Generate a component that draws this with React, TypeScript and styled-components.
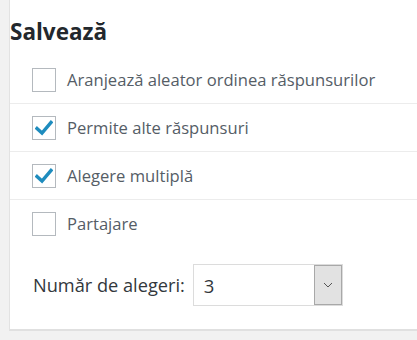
import React from "react";
import styled, { createGlobalStyle } from "styled-components";

const Global = createGlobalStyle`
  html, body { margin: 0; padding: 0; background: #f1f1f1; }
  body { font-family: "Open Sans", "Noto Sans", sans-serif; }
`;

const Page = styled.div`
  display: flex;
  height: 340px;
  padding-left: 9px;
`;

const Panel = styled.div`
  flex: 1;
  height: 331px;
  background: #fff;
  border-left: 1px solid #e2e2e2;
  border-bottom: 2px solid #e0e0e0;
  box-sizing: border-box;
  display: flex;
  flex-direction: column;
`;

const Title = styled.h2`
  margin: 0;
  padding: 17px 0 0 0;
  height: 54px;
  box-sizing: border-box;
  font-size: 22.5px;
  font-weight: 700;
  color: #23282d;
  line-height: 30px;
`;

const List = styled.div`
  display: flex;
  flex-direction: column;
  margin-top: 2px;
`;

const Row = styled.label<{ $last?: boolean }>`
  display: flex;
  align-items: center;
  gap: 11px;
  height: 47px;
  padding-left: 22px;
  border-bottom: ${(p) => (p.$last ? "none" : "1px solid #ececec")};
  font-size: 16.6px;
  color: #555d66;
`;

const Box = styled.span`
  width: 22px;
  height: 22px;
  border: 1px solid #b4b9be;
  background: #fff;
  box-sizing: content-box;
  display: flex;
  align-items: center;
  justify-content: center;
  flex-shrink: 0;
`;

const SelectRow = styled.div`
  display: flex;
  align-items: center;
  gap: 8px;
  padding-left: 23px;
  margin-top: 17px;
  font-size: 18.2px;
  color: #32373c;
`;

const Select = styled.div`
  display: flex;
  width: 150px;
  height: 42px;
  border: 1px solid #dcdcdc;
  box-sizing: border-box;
`;

const Value = styled.div`
  flex: 1;
  display: flex;
  align-items: center;
  padding-left: 10px;
  font-size: 18.5px;
  color: #32373c;
`;

const Arrow = styled.div`
  width: 26px;
  background: #e2e2e2;
  border: 1px solid #a8a8a8;
  display: flex;
  align-items: center;
  justify-content: center;
`;

const Check = () => (
  <svg width="18" height="16" viewBox="0 0 18 16">
    <path d="M2 8.5 L7 13 L16 2.5" fill="none" stroke="#1e8cbe" strokeWidth="3.4" strokeLinecap="square" />
  </svg>
);

const items: { label: string; checked: boolean }[] = [
  { label: "Aranjează aleator ordinea răspunsurilor", checked: false },
  { label: "Permite alte răspunsuri", checked: true },
  { label: "Alegere multiplă", checked: true },
  { label: "Partajare", checked: false },
];

export default function App() {
  return (
    <Page>
      <Global />
      <Panel>
        <Title>Salvează</Title>
        <List>
          {items.map((it, i) => (
            <Row key={it.label} $last={i === items.length - 1}>
              <Box>{it.checked && <Check />}</Box>
              {it.label}
            </Row>
          ))}
        </List>
        <SelectRow>
          Număr de alegeri:
          <Select>
            <Value>3</Value>
            <Arrow>
              <svg width="10" height="6" viewBox="0 0 10 6">
                <path d="M1 1 L5 5 L9 1" fill="none" stroke="#555" strokeWidth="1" />
              </svg>
            </Arrow>
          </Select>
        </SelectRow>
      </Panel>
    </Page>
  );
}
